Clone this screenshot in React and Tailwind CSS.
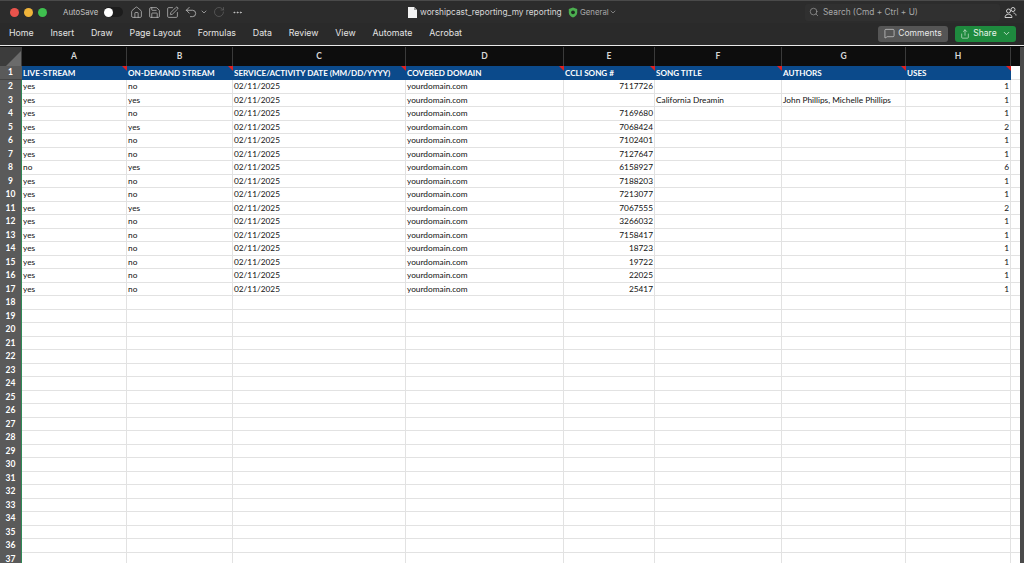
import { ChevronDown, Ellipsis, House, MessageSquare, RotateCw, Save, Search, Share, Undo2, SquarePen } from "lucide-react";

const tabs = ["Home", "Insert", "Draw", "Page Layout", "Formulas", "Data", "Review", "View", "Automate", "Acrobat"];
const columns = ["A", "B", "C", "D", "E", "F", "G", "H"];
const headers = [
  "LIVE-STREAM",
  "ON-DEMAND STREAM",
  "SERVICE/ACTIVITY DATE (MM/DD/YYYY)",
  "COVERED DOMAIN",
  "CCLI SONG #",
  "SONG TITLE",
  "AUTHORS",
  "USES",
];

const data = [
  ["yes", "no", "7117726", "", "", "1"],
  ["yes", "yes", "", "California Dreamin", "John Phillips, Michelle Phillips", "1"],
  ["yes", "no", "7169680", "", "", "1"],
  ["yes", "yes", "7068424", "", "", "2"],
  ["yes", "no", "7102401", "", "", "1"],
  ["yes", "no", "7127647", "", "", "1"],
  ["no", "yes", "6158927", "", "", "6"],
  ["yes", "no", "7188203", "", "", "1"],
  ["yes", "no", "7213077", "", "", "1"],
  ["yes", "yes", "7067555", "", "", "2"],
  ["yes", "no", "3266032", "", "", "1"],
  ["yes", "no", "7158417", "", "", "1"],
  ["yes", "no", "18723", "", "", "1"],
  ["yes", "no", "19722", "", "", "1"],
  ["yes", "no", "22025", "", "", "1"],
  ["yes", "no", "25417", "", "", "1"],
];

const rows = [];
for (let i = 0; i < 36; i++) {
  const d = data[i];
  rows.push(d ? [d[0], d[1], "02/11/2025", "yourdomain.com", d[2], d[3], d[4], d[5]] : ["", "", "", "", "", "", "", ""]);
}

const gridCols = "grid grid-cols-[22px_105px_106px_173px_158px_91px_127px_124px_105px_9px]";

function ShieldDot() {
  return (
    <svg width="10" height="11" viewBox="0 0 10 11">
      <path d="M5 .5 9.2 2v3.4c0 2.4-1.8 4.1-4.2 5.1C2.600 9.500.8 7.800.8 5.400V2z" fill="#4caf50" />
      <circle cx="5" cy="5.300" r="1.900" fill="#1f2b20" />
    </svg>
  );
}

function DocIcon() {
  return (
    <svg width="9" height="11" viewBox="0 0 9 11">
      <path d="M0 0h6l3 3v8H0z" fill="#f2f2f2" />
      <path d="M6 0v3h3z" fill="#9a9a9a" />
    </svg>
  );
}

function Flag() {
  return <div className="absolute right-0 top-0 w-0 h-0 border-t-[5px] border-l-[5px] border-t-[#e02020] border-l-transparent" />;
}

export default function App() {
  return (
    <div className="w-[1024px] h-[563px] overflow-hidden bg-[#2a2a2a] flex flex-col text-white font-['Lato','Open_Sans',sans-serif]">
      {/* title bar */}
      <div className="h-[23px] shrink-0 pl-[10px] flex items-center bg-[#2c2c2c] border-t border-[#4a4a4a] relative">
        <div className="flex gap-[5px] items-center">
          <span className="w-[9px] h-[9px] rounded-full bg-[#e9534c]" />
          <span className="w-[9px] h-[9px] rounded-full bg-[#f0b43a]" />
          <span className="w-[9px] h-[9px] rounded-full bg-[#3fc04f]" />
        </div>
        <span className="ml-[16px] mt-[1px] w-[34px] text-[7.800px] whitespace-nowrap text-[#c4c4c4] font-['Inter',sans-serif]">AutoSave</span>
        <div className="ml-[7px] w-[19px] h-[10px] rounded-full bg-[#1c1c1c] flex items-center">
          <span className="w-[9px] h-[9px] rounded-full bg-white" />
        </div>
        <div className="ml-[7px] flex items-center text-[#c8c8c8]">
          <House size={13} strokeWidth={1.3} />
          <Save size={13} strokeWidth={1.3} className="ml-[5px]" />
          <SquarePen size={13} strokeWidth={1.3} className="ml-[5px]" />
          <Undo2 size={14} strokeWidth={1.3} className="ml-[5px]" />
          <ChevronDown size={8} strokeWidth={2} className="ml-[2px]" />
          <RotateCw size={12} strokeWidth={1.3} className="ml-[5px] text-[#666]" />
          <Ellipsis size={11} strokeWidth={2} className="ml-[7px]" />
        </div>
        <div className="absolute left-[408px] flex items-center">
          <DocIcon />
          <span className="ml-[3px] w-[140px] text-[8.300px] whitespace-nowrap text-[#d8d8d8] font-['Inter',sans-serif]">worshipcast_reporting_my reporting</span>
          <span className="ml-[8px] flex"><ShieldDot /></span>
          <span className="ml-[2px] mt-[1px] text-[7.800px] text-[#a8a8a8] font-['Inter',sans-serif]">General</span>
          <ChevronDown size={8} className="text-[#a8a8a8]" />
        </div>
        <div className="absolute left-[805px] w-[195px] h-[17px] rounded-[3px] bg-[#303030] flex items-center pl-[4px] gap-[4px] text-[#a8a8a8]">
          <Search size={10} strokeWidth={1.5} />
          <span className="text-[8.300px] font-['Inter',sans-serif]">Search (Cmd + Ctrl + U)</span>
        </div>
        <svg className="absolute left-[1004px]" width="13" height="13" viewBox="0 0 13 13" fill="none" stroke="#cfcfcf" strokeWidth="1">
          <circle cx="4.500" cy="5" r="2" />
          <path d="M1 11.500c0-2 1.500-3.300 3.500-3.300s3.500 1.300 3.500 3.300z" />
          <circle cx="9" cy="3.500" r="2" />
          <path d="M9.500 7c1.400.2 2.500 1 2.500 2.500" />
        </svg>
      </div>

      {/* ribbon tabs */}
      <div className="h-[21px] shrink-0 flex items-center pl-[9px] pr-[8px] bg-[#2a2a2a]">
        <div className="flex items-center gap-[16.800px] mb-[2px] text-[8.800px] text-[#e4e4e4] font-['Inter',sans-serif]">
          {tabs.map((t) => (
            <span key={t}>{t}</span>
          ))}
        </div>
        <div className="ml-auto flex items-center gap-[7px]">
          <div className="w-[70px] h-[16px] rounded-[3px] bg-[#555555] flex items-center justify-center gap-[3px] text-[8.500px] text-[#e8e8e8] font-['Inter',sans-serif]">
            <MessageSquare size={11} strokeWidth={1.3} />
            Comments
          </div>
          <div className="w-[61px] h-[16px] rounded-[3px] bg-[#1e8a3e] flex items-center justify-center gap-[3px] text-[8.500px] text-[#eaf5ec] font-['Inter',sans-serif]">
            <Share size={10} strokeWidth={1.4} />
            Share
            <ChevronDown size={9} className="ml-[2px]" />
          </div>
        </div>
      </div>

      <div className="h-[1px] shrink-0 mt-[1px] bg-[#e8e8e8]" />
      <div className="h-[1px] shrink-0 bg-[#0a0a0a]" />

      {/* sheet */}
      <div className="flex-1 overflow-hidden bg-[#4a4a4a] pr-[4px]">
        <div className={`${gridCols} h-[19px] bg-[#0d0d0d]`}>
          <div className="bg-[#3c3c3c] relative overflow-hidden">
            <div className="absolute right-[1px] bottom-0 w-0 h-0 border-b-[15px] border-l-[15px] border-b-[#6b6b6b] border-l-transparent" />
          </div>
          {columns.map((c) => (
            <div key={c} className="flex items-center justify-center border-r border-[#3a3a3a] text-[8.500px] font-bold text-[#d8d8d8]">
              {c}
            </div>
          ))}
          <div />
        </div>

        {/* row 1 */}
        <div className={`${gridCols} h-[14px]`}>
          <div className="bg-[#5a5a5a] pr-[1px] flex items-center justify-center text-[8.500px] font-bold text-white border-b border-[#444]">1</div>
          {headers.map((h) => (
            <div key={h} className="relative bg-[#0b4a8b] pl-[1px] text-[8.100px] leading-[14px] font-bold text-white whitespace-nowrap overflow-hidden">
              {h}
              <Flag />
            </div>
          ))}
          <div className="bg-white border-b border-[#e2e2e2]" />
        </div>

        {rows.map((r, i) => (
          <div key={i} className={`${gridCols} h-[13.5px]`}>
            <div className="bg-[#5a5a5a] border-r border-[#2f8a57] flex items-center justify-center text-[8.500px] font-bold text-white">
              {i + 2}
            </div>
            {r.map((v, j) => (
              <div
                key={j}
                className={`bg-white border-r border-b border-[#e2e2e2] px-[1px] text-[8.300px] leading-[13.500px] text-[#111] whitespace-nowrap overflow-hidden ${
                  j === 4 || j === 7 ? "text-right" : "text-left"
                }`}
              >
                {v}
              </div>
            ))}
            <div className="bg-white border-b border-[#e2e2e2]" />
          </div>
        ))}
      </div>
    </div>
  );
}
